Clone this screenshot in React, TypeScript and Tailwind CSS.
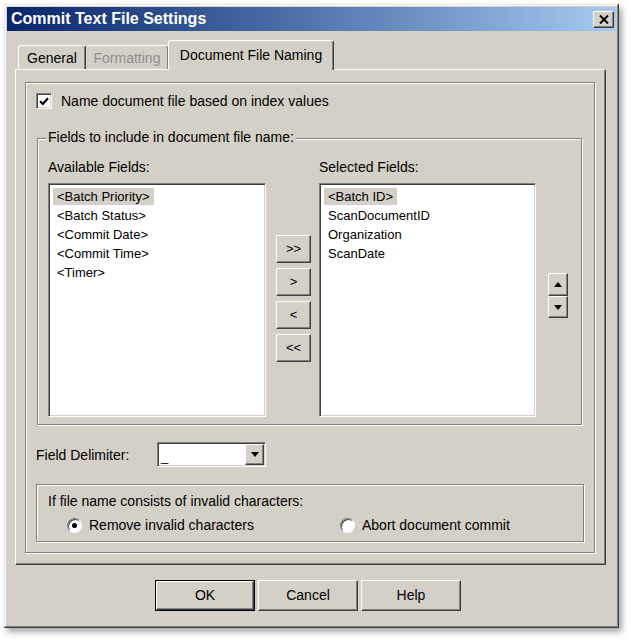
import React from "react";

// classic 3D edges
const raised =
  "border border-t-white border-l-white border-r-[#404040] border-b-[#404040] shadow-[inset_-1px_-1px_0_#808080]";
const sunken =
  "border border-t-[#808080] border-l-[#808080] border-r-white border-b-white shadow-[inset_1px_1px_0_#404040,inset_-1px_-1px_0_#d4d0c8]";
const etched = "border border-[#808080] shadow-[inset_1px_1px_0_#fff,1px_1px_0_#fff]";

const available = ["<Batch Priority>", "<Batch Status>", "<Commit Date>", "<Commit Time>", "<Timer>"];
const selected = ["<Batch ID>", "ScanDocumentID", "Organization", "ScanDate"];

function ListBox({ items }: { items: string[] }) {
  return (
    <div className={`h-[234px] bg-white ${sunken} pt-[3px] pl-[4px]`}>
      {items.map((it, i) => (
        <div key={it} className="h-[19px] flex items-center">
          <span className={`px-[4px] leading-[17px] text-[13px] ${i === 0 ? "bg-[#d4d0c8]" : ""}`}>{it}</span>
        </div>
      ))}
    </div>
  );
}

function Triangle({ up }: { up?: boolean }) {
  return (
    <svg width="8" height="5" viewBox="0 0 8 5">
      <polygon points={up ? "0,5 8,5 4,0" : "0,0 8,0 4,5"} fill="#000" />
    </svg>
  );
}

function Radio({ checked }: { checked?: boolean }) {
  return (
    <div className="w-[15px] h-[15px] rounded-full bg-white border border-t-[#808080] border-l-[#808080] border-r-white border-b-white shadow-[inset_1px_1px_0_#404040] flex items-center justify-center">
      {checked && <div className="w-[5px] h-[5px] rounded-full bg-black" />}
    </div>
  );
}

export default function App() {
  return (
    <div className="w-[631px] h-[640px] bg-white pt-[4px] pl-[4px] font-['Liberation_Sans',Arial,sans-serif] text-[14px] text-black">
      <div className="w-[615px] h-[624px] bg-[#d4d0c8] p-[3px] flex flex-col shadow-[inset_-1px_-1px_0_#404040,inset_1px_1px_0_#e8e6e0,inset_-2px_-2px_0_#808080,inset_2px_2px_0_#fff,3px_4px_6px_rgba(0,0,0,0.35)]">
        {/* Title bar */}
        <div className="h-[24px] flex items-center justify-between pl-[4px] pr-[2px] bg-linear-to-r from-[#0a246a] to-[#a6caf0]">
          <span className="text-white font-bold text-[16px] leading-[18px]">Commit Text File Settings</span>
          <div className={`w-[21px] h-[17px] bg-[#d4d0c8] ${raised} flex items-center justify-center`}>
            <svg width="10" height="9" viewBox="0 0 10 9">
              <path d="M1 0.5 L9 8.5 M9 0.5 L1 8.5" stroke="#000" strokeWidth="2" />
            </svg>
          </div>
        </div>

        <div className="ml-[8px] w-[591px]">
          {/* Tabs */}
          <div className="flex items-end h-[38px] pl-[3px]">
            <div className="w-[68px] h-[24px] border-l border-t border-white border-r border-r-[#404040] rounded-t-[3px] shadow-[inset_-1px_0_0_#808080] flex items-center justify-center pt-[1px]">
              General
            </div>
            <div className="w-[83px] h-[24px] border-t border-white border-r border-r-[#404040] rounded-t-[3px] shadow-[inset_-1px_0_0_#808080] flex items-center justify-center pt-[1px] text-[#8e8e8e]">
              Formatting
            </div>
            <div className="relative z-10 -ml-[1px] -mb-[1px] w-[166px] h-[30px] bg-[#d4d0c8] border-l border-t border-white border-r border-r-[#404040] rounded-t-[3px] shadow-[inset_-1px_0_0_#808080] flex items-center justify-center pb-[1px]">
              Document File Naming
            </div>
          </div>

          {/* Tab pane */}
          <div className={`h-[496px] ${raised} pt-[12px] pl-[9px] pr-[10px] pb-[11px]`}>
            <div className={`h-full ${etched} pt-[10px] pl-[10px]`}>
              {/* Checkbox */}
              <div className="flex items-center h-[16px]">
                <div className={`w-[16px] h-[16px] bg-white ${sunken} flex items-center justify-center`}>
                  <svg width="10" height="9" viewBox="0 0 10 9">
                    <path d="M1 4.2 L3.8 7 L9 1.2" stroke="#000" strokeWidth="2.2" fill="none" />
                  </svg>
                </div>
                <span className="ml-[9px] leading-[16px]">Name document file based on index values</span>
              </div>

              {/* Fields group */}
              <div className={`relative mt-[29px] ml-[1px] w-[545px] h-[287px] ${etched} pl-[10px] pt-[20px]`}>
                <span className="absolute -top-[10px] left-[8px] px-[2px] leading-[16px] bg-[#d4d0c8]">
                  Fields to include in document file name:
                </span>
                <div className="flex">
                  <div className="w-[218px]">
                    <div className="leading-[16px] h-[16px]">Available Fields:</div>
                    <div className="mt-[8px]">
                      <ListBox items={available} />
                    </div>
                  </div>
                  <div className="ml-[10px] w-[35px] pt-[76px] flex flex-col gap-[5px]">
                    {[">>", ">", "<", "<<"].map((b) => (
                      <div key={b} className={`h-[28px] ${raised} flex items-center justify-center text-[13px]`}>
                        {b}
                      </div>
                    ))}
                  </div>
                  <div className="ml-[8px] w-[217px]">
                    <div className="leading-[16px] h-[16px]">Selected Fields:</div>
                    <div className="mt-[8px]">
                      <ListBox items={selected} />
                    </div>
                  </div>
                  <div className="ml-[12px] w-[20px] pt-[114px] flex flex-col">
                    <div className={`h-[23px] ${raised} flex items-center justify-center`}>
                      <Triangle up />
                    </div>
                    <div className={`h-[22px] ${raised} flex items-center justify-center`}>
                      <Triangle />
                    </div>
                  </div>
                </div>
              </div>

              {/* Delimiter */}
              <div className="mt-[17px] flex items-center h-[25px]">
                <span className="w-[121px] leading-[16px]">Field Delimiter:</span>
                <div className={`w-[109px] h-[25px] bg-white ${sunken} flex items-center justify-between pl-[3px] pr-[1px]`}>
                  <span className="text-[13px] leading-[16px] pt-[4px]">_</span>
                  <div className={`w-[19px] h-[21px] bg-[#d4d0c8] ${raised} flex items-center justify-center`}>
                    <Triangle />
                  </div>
                </div>
              </div>

              {/* Invalid characters group */}
              <div className={`mt-[17px] w-[548px] h-[58px] ${etched} pl-[11px] pt-[8px]`}>
                <div className="leading-[16px]">If file name consists of invalid characters:</div>
                <div className="mt-[8px] flex items-center h-[16px]">
                  <div className="ml-[19px]">
                    <Radio checked />
                  </div>
                  <span className="ml-[7px] leading-[16px]">Remove invalid characters</span>
                  <div className="ml-[86px]">
                    <Radio />
                  </div>
                  <span className="ml-[7px] leading-[16px]">Abort document commit</span>
                </div>
              </div>
            </div>
          </div>
        </div>

        {/* Dialog buttons */}
        <div className="mt-[15px] ml-[148px] flex gap-[3px]">
          <div className="w-[100px] h-[31px] border border-black">
            <div className={`h-full ${raised} flex items-center justify-center`}>OK</div>
          </div>
          <div className={`w-[100px] h-[31px] ${raised} flex items-center justify-center`}>Cancel</div>
          <div className={`w-[100px] h-[31px] ${raised} flex items-center justify-center`}>Help</div>
        </div>
      </div>
    </div>
  );
}
